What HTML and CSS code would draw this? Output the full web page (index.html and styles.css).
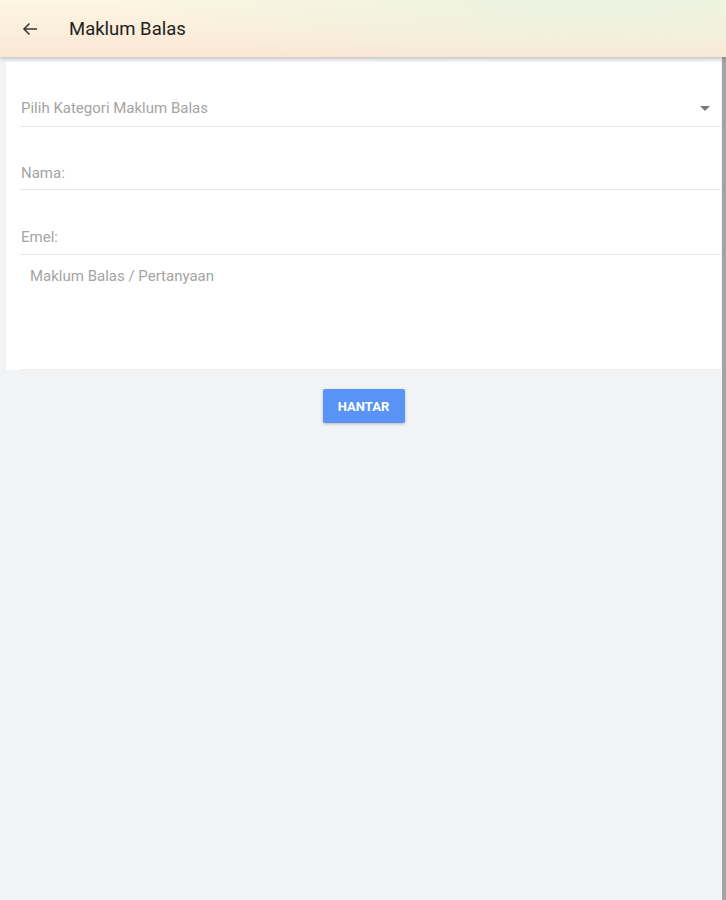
FILE: index.html
```html
<!DOCTYPE html>
<html lang="ms">
<head>
<meta charset="utf-8">
<title>Maklum Balas</title>
<link rel="stylesheet" href="styles.css">
</head>
<body>
<header class="topbar">
  <button class="back" aria-label="Kembali">
    <svg width="24" height="24" viewBox="0 0 24 24"><path d="M19 12H6M11.5 6.5L6 12l5.5 5.5" fill="none" stroke="#3a3a3a" stroke-width="1.6"/></svg>
  </button>
  <h1 class="title">Maklum Balas</h1>
</header>
<div class="page">
  <main class="content">
    <form class="card">
      <div class="field field-select">
        <span class="placeholder">Pilih Kategori Maklum Balas</span>
        <svg class="caret" width="10" height="5" viewBox="0 0 10 5"><path d="M0 0l5 5 5-5z" fill="#7a7a7a"/></svg>
      </div>
      <div class="field field-name"><span class="placeholder">Nama:</span></div>
      <div class="field field-email"><span class="placeholder">Emel:</span></div>
      <div class="field field-area"><span class="placeholder">Maklum Balas / Pertanyaan</span></div>
    </form>
    <div class="actions">
      <button type="button" class="submit">HANTAR</button>
    </div>
  </main>
  <div class="scrollbar"></div>
</div>
</body>
</html>
```
FILE: styles.css
```css
* { box-sizing: border-box; }
html, body { margin: 0; padding: 0; }
body {
  background: #f2f3f5;
  font-family: Roboto, "Liberation Sans", sans-serif;
  min-height: 900px;
}
.topbar {
  height: 57px;
  display: flex;
  align-items: center;
  padding-left: 18px;
  background:
    radial-gradient(ellipse 480px 70px at 82% 0%, rgba(232, 243, 224, 0.9), rgba(232, 243, 224, 0) 100%),
    linear-gradient(180deg, #fcf6e2 0%, #fbecd9 70%, #fae7d4 100%);
  box-shadow: 0 2px 3px rgba(0, 0, 0, 0.18);
  position: relative;
  z-index: 1;
}
.back {
  border: 0;
  background: transparent;
  padding: 0;
  width: 24px;
  height: 24px;
  display: flex;
}
.title {
  margin: 0 0 0 27px;
  font-size: 18.5px;
  font-weight: 400;
  color: #222;
}
.page {
  display: flex;
  min-height: 843px;
}
.content {
  flex: 1;
  padding: 5px 1px 0 6px;
}
.scrollbar {
  width: 4px;
  background: #a3a3a3;
}
.card {
  background: #fff;
  padding-left: 14px;
  margin: 0;
}
.field {
  border-bottom: 1px solid #e6e6e6;
  display: flex;
  align-items: center;
  line-height: 20px;
  height: 20px;
  box-sizing: content-box;
}
.placeholder {
  font-size: 15px;
  color: #a4a4a4;
}
.field-select { padding: 36px 11px 8px 1px; justify-content: space-between; }
.field-name { padding: 36px 0 6px 1px; }
.field-email { padding: 37px 0 7px 1px; }
.field-area {
  align-items: flex-start;
  padding: 11px 0 0 10px;
  box-sizing: border-box;
  height: 115px;
  border-bottom-color: #ececec;
}
.actions {
  display: flex;
  justify-content: center;
  padding-top: 19px;
}
.submit {
  width: 82px;
  height: 34px;
  border: 0;
  border-radius: 2px;
  background: #5a93f6;
  color: #fff;
  font-family: Roboto, "Liberation Sans", sans-serif;
  font-size: 13px;
  font-weight: 700;
  box-shadow: 0 1px 3px rgba(0, 0, 0, 0.25);
}
```
